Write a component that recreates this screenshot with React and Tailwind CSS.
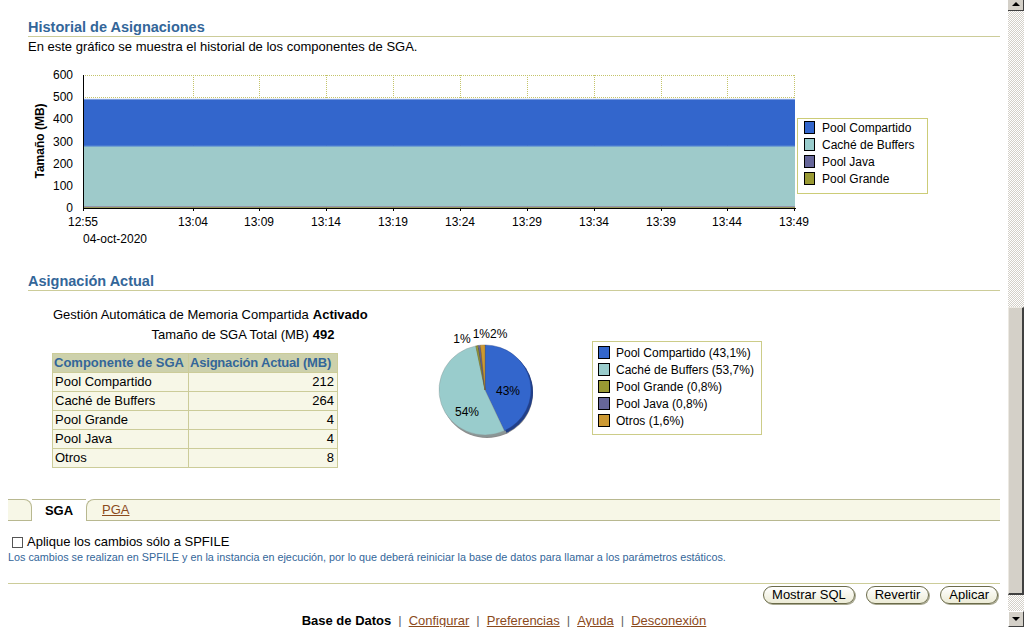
import React from 'react';

const ticks = [
  ['12:55', 83], ['13:04', 193], ['13:09', 259], ['13:14', 326], ['13:19', 393],
  ['13:24', 460], ['13:29', 527], ['13:34', 594], ['13:39', 661], ['13:44', 727], ['13:49', 794],
];

const chartLegend = [
  ['Pool Compartido', '#3366cc'],
  ['Caché de Buffers', '#99cccc'],
  ['Pool Java', '#666699'],
  ['Pool Grande', '#999933'],
];

const slices = [
  { name: 'Pool Compartido', pct: 43.1, color: '#3366cc', dark: '#223f88' },
  { name: 'Caché de Buffers', pct: 53.7, color: '#99cccc', dark: '#8a9696' },
  { name: 'Pool Grande', pct: 0.8, color: '#999933', dark: '#666622' },
  { name: 'Pool Java', pct: 0.8, color: '#666699', dark: '#444466' },
  { name: 'Otros', pct: 1.6, color: '#cc9933', dark: '#886622' },
];

const rows = [
  ['Pool Compartido', 212],
  ['Caché de Buffers', 264],
  ['Pool Grande', 4],
  ['Pool Java', 4],
  ['Otros', 8],
];

const FONT = 'Liberation Sans, Arial, sans-serif';

function slicePath(cx, cy, rx, ry, a0, a1) {
  const p = (a) => [cx + rx * Math.sin((a * Math.PI) / 180), cy - ry * Math.cos((a * Math.PI) / 180)];
  const [x0, y0] = p(a0);
  const [x1, y1] = p(a1);
  const large = a1 - a0 > 180 ? 1 : 0;
  return `M${cx},${cy} L${x0},${y0} A${rx},${ry} 0 ${large} 1 ${x1},${y1} Z`;
}

const HistoryChart = () => {
  const y = (mb) => 208 - mb * (133 / 600);
  return (
    <svg viewBox="8 65 992 185" width="992" height="185" className="block mt-[10px]" fontFamily={FONT}>
      {/* grid */}
      <line x1="83" y1="75.5" x2="795" y2="75.5" stroke="#c4c46a" strokeDasharray="1 1" />
      <line x1="83" y1="97.5" x2="795" y2="97.5" stroke="#c4c46a" strokeDasharray="1 1" />
      {ticks.slice(1).map(([t, x]) => (
        <line key={t} x1={x + 0.5} y1="75" x2={x + 0.5} y2="208" stroke="#c4c46a" strokeDasharray="1 1" />
      ))}
      {/* stacked areas */}
      <rect x="84" y={y(492)} width="711" height={y(280) - y(492)} fill="#3366cc" />
      <line x1="84" y1={y(492) + 0.5} x2="795" y2={y(492) + 0.5} stroke="#7f9fe0" />
      <rect x="84" y={y(280)} width="711" height={y(8) - y(280)} fill="#9ecaca" />
      <line x1="84" y1={y(280) + 0.5} x2="795" y2={y(280) + 0.5} stroke="#6f9fd0" />
      <rect x="84" y={y(8)} width="711" height={y(4) - y(8)} fill="#7a7a99" />
      <rect x="84" y={y(4)} width="711" height={208 - y(4)} fill="#8c8c4a" />
      {/* axes */}
      <line x1="83.5" y1="75" x2="83.5" y2="209" stroke="#000" />
      <line x1="83" y1="208.5" x2="796" y2="208.5" stroke="#000" />
      {[0, 100, 200, 300, 400, 500, 600].map((v) => (
        <text key={v} x="73" y={y(v) + 4} textAnchor="end" fontSize="12" fill="#000">{v}</text>
      ))}
      {ticks.map(([t, x]) => (
        <g key={t}>
          <line x1={x + 0.5} y1="208" x2={x + 0.5} y2="211" stroke="#000" />
          <text x={x} y="226" textAnchor="middle" fontSize="12" fill="#000">{t}</text>
        </g>
      ))}
      <text x="83" y="243" fontSize="12" fill="#000">04-oct-2020</text>
      <text transform="translate(44 141) rotate(-90)" textAnchor="middle" fontSize="12" fontWeight="bold" fill="#000">Tamaño (MB)</text>
      {/* legend */}
      <rect x="797.5" y="118.5" width="130" height="75" fill="#fff" stroke="#cccc77" />
      {chartLegend.map(([name, color], i) => (
        <g key={name}>
          <rect x="804.5" y={121.5 + i * 17} width="10" height="12" fill={color} stroke="#000" />
          <text x="822" y={131.5 + i * 17} fontSize="12" fill="#000">{name}</text>
        </g>
      ))}
    </svg>
  );
};

const PieChart = () => {
  let a = 0;
  const arcs = slices.map((s) => {
    const a0 = a;
    a += (s.pct / 100) * 360;
    return { ...s, a0, a1: a };
  });
  return (
    <svg viewBox="420 320 360 130" width="360" height="130" className="block mt-[15px]" fontFamily={FONT}>
      <ellipse cx="487" cy="393" rx="46" ry="45" fill="#8c8c8c" />
      {arcs.map((s) => (
        <path key={s.name + 'd'} d={slicePath(487, 392, 46, 45, s.a0, s.a1)} fill={s.dark} />
      ))}
      {arcs.map((s) => (
        <path key={s.name} d={slicePath(485, 390, 46, 45, s.a0, s.a1)} fill={s.color} stroke={s.dark} strokeWidth="0.4" />
      ))}
      <text x="508" y="395" textAnchor="middle" fontSize="12" fill="#000">43%</text>
      <text x="467" y="416" textAnchor="middle" fontSize="12" fill="#000">54%</text>
      <text x="462" y="343" textAnchor="middle" fontSize="12" fill="#000">1%</text>
      <text x="490" y="338" textAnchor="middle" fontSize="12" fill="#000">1%2%</text>
      <rect x="592.5" y="341.5" width="169" height="93" fill="#fff" stroke="#cccc88" />
      {slices.map((s, i) => (
        <g key={s.name}>
          <rect x="598.5" y={346.5 + i * 17} width="11" height="12" fill={s.color} stroke="#000" />
          <text x="616" y={357 + i * 17} fontSize="12" fill="#000">
            {s.name} ({s.pct.toFixed(1).replace('.', ',')}%)
          </text>
        </g>
      ))}
    </svg>
  );
};

const Heading = ({ children, className = '' }) => (
  <div className={`ml-[20px] h-[19px] border-b border-[#cccc99] text-[14.5px] font-bold leading-[18px] text-[#336699] ${className}`}>
    {children}
  </div>
);

const Button = ({ children }) => (
  <button className="h-[18px] px-[8px] rounded-full border border-[#6b6b4a] bg-gradient-to-b from-white to-[#ecebd6] text-[13px] leading-[16px] text-black shadow-[1px_1px_0_#a8a890]">
    {children}
  </button>
);

const Scrollbar = () => (
  <div className="w-[16px] h-[627px] flex flex-col bg-[repeating-conic-gradient(#d4d0c8_0%_25%,#ffffff_0%_50%)] bg-[length:2px_2px]">
    <div className="h-[11px] bg-[#d4d0c8] border-b border-r border-[#404040] flex items-start justify-center pt-[2px]">
      <div className="w-0 h-0 border-l-[4px] border-r-[4px] border-b-[4px] border-l-transparent border-r-transparent border-b-black" />
    </div>
    <div className="h-[296px]" />
    <div className="h-[288px] bg-[#d4d0c8] border-t border-l border-t-[#ece9e2] border-l-[#ece9e2] border-r-2 border-b-2 border-r-[#404040] border-b-[#404040]" />
    <div className="flex-1" />
    <div className="h-[16px] bg-[#d4d0c8] border-t border-l border-t-white border-l-white border-r border-b border-r-[#404040] border-b-[#404040] flex items-center justify-center">
      <div className="w-0 h-0 border-l-[4px] border-r-[4px] border-t-[4px] border-l-transparent border-r-transparent border-t-black" />
    </div>
  </div>
);

export default function App() {
  return (
    <div className="w-[1024px] h-[627px] overflow-hidden bg-white flex font-['Liberation_Sans',Arial,sans-serif] text-black">
      <main className="w-[1008px] px-[8px] pt-[18px]">
        <Heading>Historial de Asignaciones</Heading>
        <p className="ml-[20px] mt-[2px] text-[13px] leading-[16px]">
          En este gráfico se muestra el historial de los componentes de SGA.
        </p>
        <HistoryChart />

        <Heading className="mt-[22px]">Asignación Actual</Heading>
        <div className="flex pt-[14px]">
          <div className="ml-[44px] w-[368px]">
            <table className="ml-[1px] text-[13px]">
              <tbody>
                <tr className="h-[20px]">
                  <td className="text-right p-0">Gestión Automática de Memoria Compartida</td>
                  <td className="pl-[4px] font-bold">Activado</td>
                </tr>
                <tr className="h-[20px]">
                  <td className="text-right p-0">Tamaño de SGA Total (MB)</td>
                  <td className="pl-[4px] font-bold">492</td>
                </tr>
              </tbody>
            </table>
            <table className="mt-[8px] border-collapse text-[13px] leading-[16px]">
              <thead>
                <tr className="h-[19px] bg-[#cdd1ac]">
                  <th className="w-[136px] border border-[#cccc99] px-[1px] text-left font-bold text-[#336699] whitespace-nowrap">Componente de SGA</th>
                  <th className="w-[149px] border border-[#cccc99] px-[1px] text-left font-bold text-[#336699] whitespace-nowrap tracking-[-0.2px]">Asignación Actual (MB)</th>
                </tr>
              </thead>
              <tbody>
                {rows.map(([name, val]) => (
                  <tr key={name} className="h-[19px] bg-[#f7f7e7]">
                    <td className="border border-[#cccc99] px-[2px]">{name}</td>
                    <td className="border border-[#cccc99] pr-[3px] text-right">{val}</td>
                  </tr>
                ))}
              </tbody>
            </table>
          </div>
          <PieChart />
        </div>

        <div className="mt-[31px] h-[22px] flex text-[13px]">
          <div className="w-[24px] bg-[#f7f7e7] border-t border-b border-r border-[#b8b890] rounded-tr-[8px]" />
          <div className="w-[54px] bg-white border-t border-[#b8b890] flex items-center justify-center font-bold">SGA</div>
          <div className="flex-1 bg-[#f7f7e7] border-t border-b border-l border-[#b8b890] rounded-tl-[8px] flex items-center pl-[15px]">
            <span className="underline text-[#8b4a1c]">PGA</span>
          </div>
        </div>

        <div className="mt-[13px] h-[16px] flex items-center text-[13px]">
          <span className="ml-[4px] w-[11px] h-[11px] border border-[#555] bg-white" />
          <span className="ml-[4px]">Aplique los cambios sólo a SPFILE</span>
        </div>
        <p className="mt-[1px] text-[10.8px] leading-[12px] text-[#336699] whitespace-nowrap">
          Los cambios se realizan en SPFILE y en la instancia en ejecución, por lo que deberá reiniciar la base de datos para llamar a los parámetros estáticos.
        </p>

        <div className="mt-[20px] border-t border-[#cccc99]" />
        <div className="mt-[2px] flex justify-end gap-[11px] pr-[2px]">
          <Button>Mostrar SQL</Button>
          <Button>Revertir</Button>
          <Button>Aplicar</Button>
        </div>

        <div className="mt-[9px] h-[16px] text-center text-[13px] leading-[16px]">
          <span className="font-bold">Base de Datos</span>
          <span className="mx-[7px] text-[#666]">|</span>
          <span className="underline text-[#8b4a1c]">Configurar</span>
          <span className="mx-[7px] text-[#666]">|</span>
          <span className="underline text-[#8b4a1c]">Preferencias</span>
          <span className="mx-[7px] text-[#666]">|</span>
          <span className="underline text-[#8b4a1c]">Ayuda</span>
          <span className="mx-[7px] text-[#666]">|</span>
          <span className="underline text-[#8b4a1c]">Desconexión</span>
        </div>
      </main>
      <Scrollbar />
    </div>
  );
}
